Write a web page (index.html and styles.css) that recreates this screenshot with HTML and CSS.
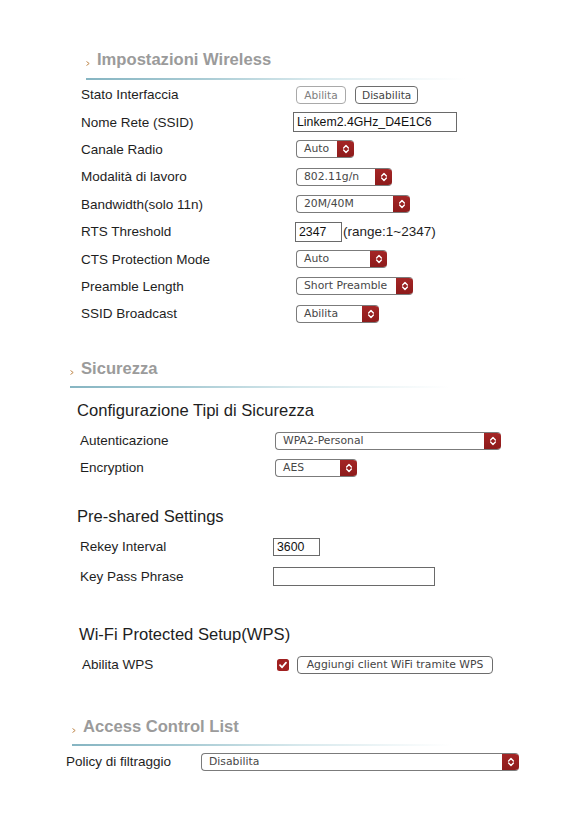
FILE: index.html
```html
<!DOCTYPE html>
<html lang="it">
<head>
<meta charset="utf-8">
<title>Impostazioni Wireless</title>
<link rel="stylesheet" href="styles.css">
</head>
<body>
<div class="page">

  <section class="sec sec-wireless">
    <h2 class="sec-title"><svg class="bullet" viewBox="0 0 4 5" width="4" height="5"><polyline points="0.5,0.5 3.2,2.5 0.5,4.5" fill="none" stroke="#c08a4e" stroke-width="1"/></svg>Impostazioni Wireless</h2>
    <div class="sec-rule"></div>
    <div class="rows rows-wl">
      <div class="row"><span class="label">Stato Interfaccia</span><div class="ctrl"><button class="btn btn-light">Abilita</button><button class="btn">Disabilita</button></div></div>
      <div class="row"><span class="label">Nome Rete (SSID)</span><div class="ctrl"><span class="input input-ssid">Linkem2.4GHz_D4E1C6</span></div></div>
      <div class="row"><span class="label">Canale Radio</span><div class="ctrl"><span class="select w58"><span class="sel-text">Auto</span><span class="sel-arrow"><svg viewBox="0 0 8 12" width="8" height="12"><path d="M1.6 5 L4 2.6 L6.4 5 M1.6 7 L4 9.4 L6.4 7" fill="none" stroke="#fff" stroke-width="1.4" stroke-linecap="round" stroke-linejoin="round"/></svg></span></span></div></div>
      <div class="row"><span class="label">Modalità di lavoro</span><div class="ctrl"><span class="select w96"><span class="sel-text">802.11g/n</span><span class="sel-arrow"><svg viewBox="0 0 8 12" width="8" height="12"><path d="M1.6 5 L4 2.6 L6.4 5 M1.6 7 L4 9.4 L6.4 7" fill="none" stroke="#fff" stroke-width="1.4" stroke-linecap="round" stroke-linejoin="round"/></svg></span></span></div></div>
      <div class="row"><span class="label">Bandwidth(solo 11n)</span><div class="ctrl"><span class="select w114"><span class="sel-text">20M/40M</span><span class="sel-arrow"><svg viewBox="0 0 8 12" width="8" height="12"><path d="M1.6 5 L4 2.6 L6.4 5 M1.6 7 L4 9.4 L6.4 7" fill="none" stroke="#fff" stroke-width="1.4" stroke-linecap="round" stroke-linejoin="round"/></svg></span></span></div></div>
      <div class="row"><span class="label">RTS Threshold</span><div class="ctrl"><span class="input input-rts">2347</span><span class="range">(range:1~2347)</span></div></div>
      <div class="row"><span class="label">CTS Protection Mode</span><div class="ctrl"><span class="select w91"><span class="sel-text">Auto</span><span class="sel-arrow"><svg viewBox="0 0 8 12" width="8" height="12"><path d="M1.6 5 L4 2.6 L6.4 5 M1.6 7 L4 9.4 L6.4 7" fill="none" stroke="#fff" stroke-width="1.4" stroke-linecap="round" stroke-linejoin="round"/></svg></span></span></div></div>
      <div class="row"><span class="label">Preamble Length</span><div class="ctrl"><span class="select w117"><span class="sel-text">Short Preamble</span><span class="sel-arrow"><svg viewBox="0 0 8 12" width="8" height="12"><path d="M1.6 5 L4 2.6 L6.4 5 M1.6 7 L4 9.4 L6.4 7" fill="none" stroke="#fff" stroke-width="1.4" stroke-linecap="round" stroke-linejoin="round"/></svg></span></span></div></div>
      <div class="row"><span class="label">SSID Broadcast</span><div class="ctrl"><span class="select w83"><span class="sel-text">Abilita</span><span class="sel-arrow"><svg viewBox="0 0 8 12" width="8" height="12"><path d="M1.6 5 L4 2.6 L6.4 5 M1.6 7 L4 9.4 L6.4 7" fill="none" stroke="#fff" stroke-width="1.4" stroke-linecap="round" stroke-linejoin="round"/></svg></span></span></div></div>
    </div>
  </section>

  <section class="sec sec-security">
    <h2 class="sec-title"><svg class="bullet" viewBox="0 0 4 5" width="4" height="5"><polyline points="0.5,0.5 3.2,2.5 0.5,4.5" fill="none" stroke="#c08a4e" stroke-width="1"/></svg>Sicurezza</h2>
    <div class="sec-rule"></div>

    <h3 class="subhead sub-config">Configurazione Tipi di Sicurezza</h3>
    <div class="rows rows-auth">
      <div class="row"><span class="label">Autenticazione</span><div class="ctrl"><span class="select w226"><span class="sel-text">WPA2-Personal</span><span class="sel-arrow"><svg viewBox="0 0 8 12" width="8" height="12"><path d="M1.6 5 L4 2.6 L6.4 5 M1.6 7 L4 9.4 L6.4 7" fill="none" stroke="#fff" stroke-width="1.4" stroke-linecap="round" stroke-linejoin="round"/></svg></span></span></div></div>
      <div class="row"><span class="label">Encryption</span><div class="ctrl"><span class="select w82"><span class="sel-text">AES</span><span class="sel-arrow"><svg viewBox="0 0 8 12" width="8" height="12"><path d="M1.6 5 L4 2.6 L6.4 5 M1.6 7 L4 9.4 L6.4 7" fill="none" stroke="#fff" stroke-width="1.4" stroke-linecap="round" stroke-linejoin="round"/></svg></span></span></div></div>
    </div>

    <h3 class="subhead sub-psk">Pre-shared Settings</h3>
    <div class="rows rows-psk">
      <div class="row"><span class="label">Rekey Interval</span><div class="ctrl"><span class="input input-rekey">3600</span></div></div>
      <div class="row"><span class="label">Key Pass Phrase</span><div class="ctrl"><span class="input input-pass"></span></div></div>
    </div>

    <h3 class="subhead sub-wps">Wi-Fi Protected Setup(WPS)</h3>
    <div class="rows rows-wps">
      <div class="row"><span class="label">Abilita WPS</span><div class="ctrl"><span class="check"><svg viewBox="0 0 12 12" width="12" height="12"><path d="M3 6.2 L5.1 8.3 L9 3.6" fill="none" stroke="#fff" stroke-width="1.8" stroke-linecap="round" stroke-linejoin="round"/></svg></span><button class="btn btn-wps">Aggiungi client WiFi tramite WPS</button></div></div>
    </div>
  </section>

  <section class="sec sec-acl">
    <h2 class="sec-title"><svg class="bullet" viewBox="0 0 4 5" width="4" height="5"><polyline points="0.5,0.5 3.2,2.5 0.5,4.5" fill="none" stroke="#c08a4e" stroke-width="1"/></svg>Access Control List</h2>
    <div class="sec-rule"></div>
    <div class="rows rows-acl">
      <div class="row"><span class="label">Policy di filtraggio</span><div class="ctrl"><span class="select w318"><span class="sel-text">Disabilita</span><span class="sel-arrow"><svg viewBox="0 0 8 12" width="8" height="12"><path d="M1.6 5 L4 2.6 L6.4 5 M1.6 7 L4 9.4 L6.4 7" fill="none" stroke="#fff" stroke-width="1.4" stroke-linecap="round" stroke-linejoin="round"/></svg></span></span></div></div>
    </div>
  </section>

</div>
</body>
</html>
```

FILE: styles.css
```css
* { box-sizing: border-box; }

html, body {
  margin: 0;
  padding: 0;
  background: #ffffff;
}

body {
  font-family: "Liberation Sans", Arial, Helvetica, sans-serif;
  color: #1e1e1e;
  width: 582px;
  height: 822px;
  overflow: hidden;
}

.page {
  display: flex;
  flex-direction: column;
  padding-top: 45px;
}

.sec {
  display: flex;
  flex-direction: column;
}

/* section titles */
.sec-title {
  margin: 0;
  height: 30px;
  line-height: 30px;
  font-size: 16.6px;
  font-weight: bold;
  color: #9b9b9b;
  display: flex;
  align-items: center;
}

.bullet {
  display: block;
  align-self: flex-end;
  margin-bottom: 9px;
  margin-right: 7px;
  flex: none;
}

.sec-rule {
  height: 2px;
  width: 380px;
  background: linear-gradient(to right, #86b5c2 0%, #a8cbd4 30%, #d8e9ed 60%, rgba(255, 255, 255, 0) 100%);
}

.subhead {
  margin: 0;
  height: 26px;
  line-height: 26px;
  font-size: 16.6px;
  font-weight: normal;
  color: #1e1e1e;
}

.rows {
  display: flex;
  flex-direction: column;
}

.row {
  display: flex;
  align-items: center;
  height: 27.4px;
}

.label {
  flex: none;
  font-size: 13.5px;
  color: #1e1e1e;
}

.ctrl {
  display: flex;
  align-items: center;
}

/* ---- wireless section ---- */
.sec-wireless .sec-title { margin-left: 86px; }
.sec-wireless .sec-rule { margin-left: 86px; margin-top: 3px; }
.rows-wl { margin-left: 81px; margin-top: 1px; }
.rows-wl .label { width: 215px; }

/* ---- security section ---- */
.sec-security { margin-top: 26.4px; }
.sec-security .sec-title { margin-left: 70px; }
.sec-security .sec-rule { margin-left: 70px; margin-top: 2px; }

.sub-config { margin-left: 77px; margin-top: 10px; }
.rows-auth { margin-left: 80px; margin-top: 3.5px; }
.rows-auth .row { height: 27px; }
.rows-auth .label { width: 195px; }

.sub-psk { margin-left: 77px; margin-top: 22.5px; }
.rows-psk { margin-left: 80px; margin-top: 2px; }
.rows-psk .row { height: 30px; }
.rows-psk .label { width: 193px; }

.sub-wps { margin-left: 79px; margin-top: 30px; }
.rows-wps { margin-left: 82px; margin-top: 3px; }
.rows-wps .row { height: 28px; }
.rows-wps .label { width: 195px; }

/* ---- ACL section ---- */
.sec-acl { margin-top: 33px; }
.sec-acl .sec-title { margin-left: 72px; }
.sec-acl .sec-rule { margin-left: 72px; margin-top: 2px; }
.rows-acl { margin-left: 66px; margin-top: 3px; }
.rows-acl .row { height: 26px; }
.rows-acl .label { width: 135px; }

/* ---- buttons ---- */
.btn {
  font-family: "DejaVu Sans", Verdana, sans-serif;
  font-size: 10.6px;
  height: 18px;
  padding: 0 6px;
  line-height: 16px;
  background: #ffffff;
  border: 1px solid #6d6d6d;
  border-radius: 4px;
  color: #444444;
  margin: 0;
}

.btn-light {
  border-color: #a9a9a9;
  color: #808080;
  width: 50px;
  margin-right: 9px;
}

.btn-wps {
  width: 196px;
  font-size: 10.8px;
  margin-left: 8px;
  padding: 0;
}

/* ---- inputs ---- */
.input {
  display: block;
  background: #ffffff;
  border: 1px solid #6a6a6a;
  font-size: 12.3px;
  color: #111;
  padding-left: 3px;
  white-space: nowrap;
}

.input-ssid {
  width: 164px;
  height: 20px;
  line-height: 18px;
  margin-left: -3px;
}

.input-rts {
  width: 47px;
  height: 20px;
  line-height: 18px;
  margin-left: -1px;
}

.range {
  font-size: 13.5px;
  margin-left: 1px;
}

.input-rekey {
  width: 47px;
  height: 18px;
  line-height: 16px;
}

.input-pass {
  width: 162px;
  height: 19px;
}

/* ---- selects ---- */
.select {
  display: flex;
  align-items: stretch;
  height: 18px;
  border: 1px solid #7b7b7b;
  border-right: none;
  border-radius: 4px;
  background: #ffffff;
  overflow: hidden;
  font-family: "DejaVu Sans", Verdana, sans-serif;
  font-size: 10.8px;
  color: #474747;
}

.sel-text {
  flex: 1;
  padding-left: 7px;
  line-height: 16px;
  white-space: nowrap;
}

.sel-arrow {
  flex: none;
  width: 17px;
  margin-top: -1px;
  margin-bottom: -1px;
  background: linear-gradient(#a52626, #8c1a1a);
  display: flex;
  align-items: center;
  justify-content: center;
}

.w58 { width: 58px; }
.w82 { width: 82px; }
.w83 { width: 83px; }
.w91 { width: 91px; }
.w96 { width: 96px; }
.w114 { width: 114px; }
.w117 { width: 117px; }
.w226 { width: 226px; }
.w318 { width: 318px; }

/* ---- checkbox ---- */
.check {
  display: flex;
  width: 12px;
  height: 12px;
  border-radius: 2.5px;
  background: #a02020;
  align-items: center;
  justify-content: center;
}
```
